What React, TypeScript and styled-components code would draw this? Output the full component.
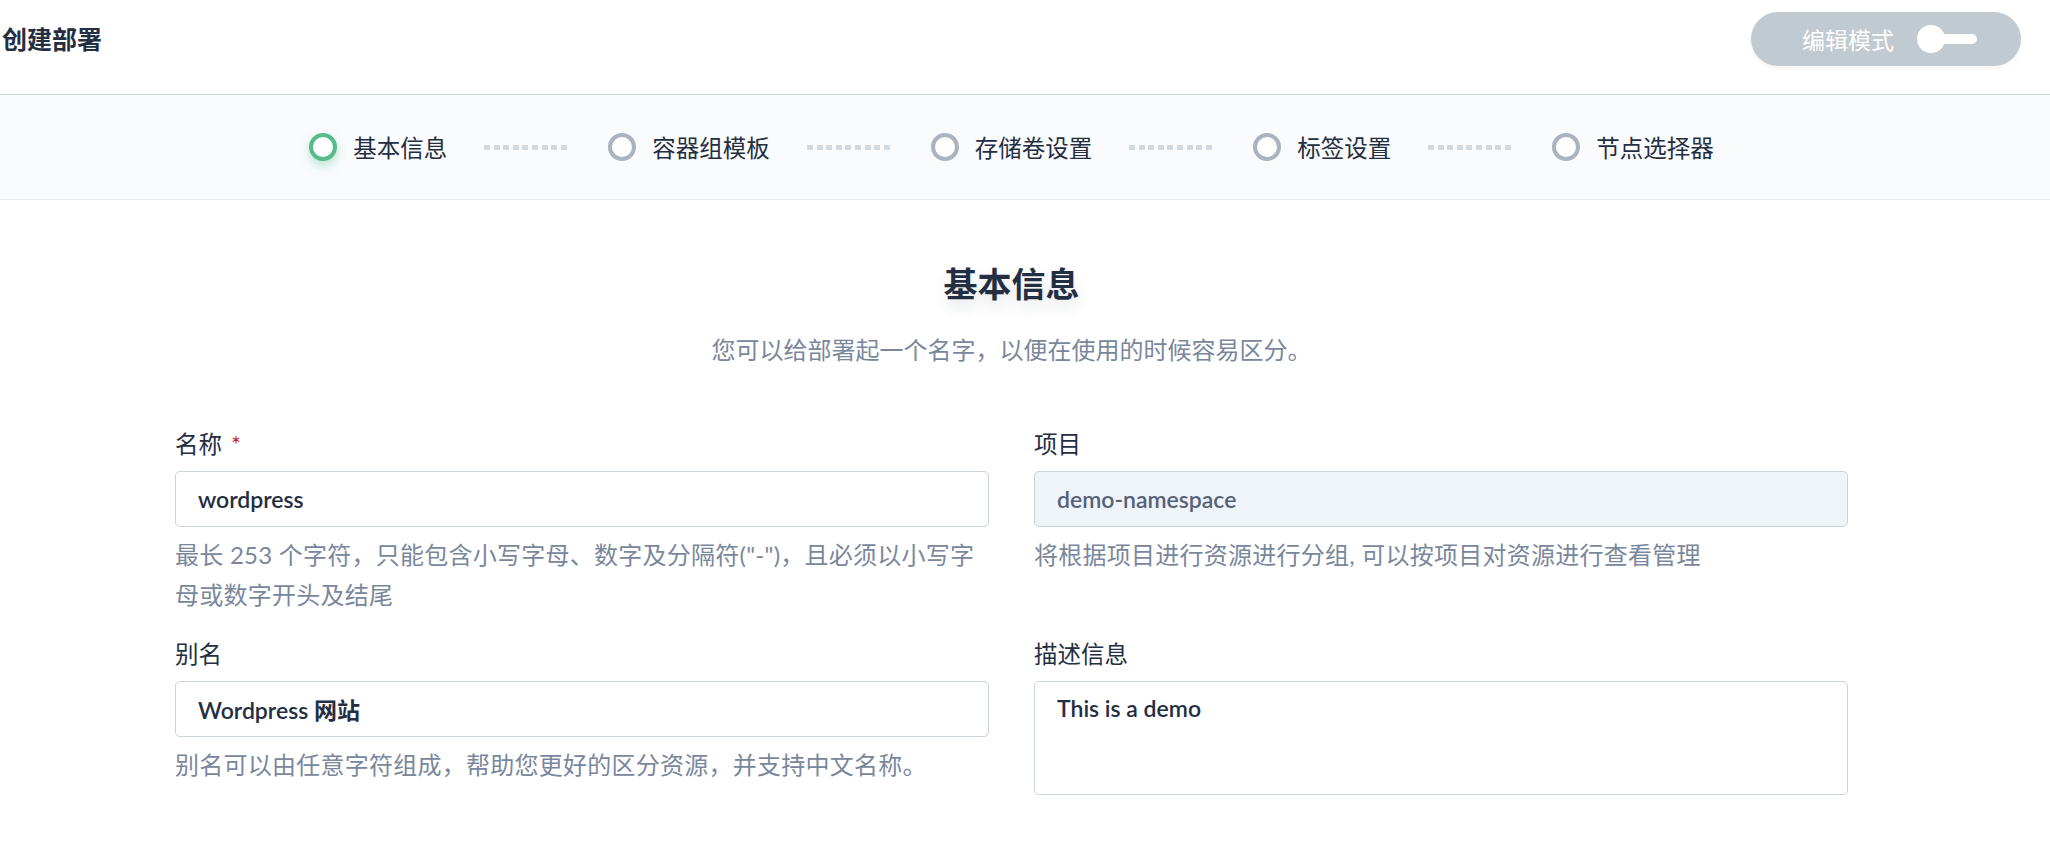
import React, { FC } from 'react'
import styled, { createGlobalStyle } from 'styled-components'

const GlobalStyle = createGlobalStyle`
    body {
        margin: 0;
        background: #ffffff;
        font-family: 'Lato', 'Noto Sans CJK SC', sans-serif;
        color: #242e42;
    }
    * {
        box-sizing: border-box;
    }
`

export const Page = styled.div`
    width: 2050px;
    height: 842px;
    overflow: hidden;
    background: #ffffff;
`

export const Header = styled.div`
    display: flex;
    justify-content: space-between;
    align-items: center;
    padding: 12px 29px 28px 2px;
`

export const PageTitle = styled.h1`
    margin: 0;
    font-size: 25px;
    line-height: 54px;
    font-weight: 600;
    color: #242e42;
`

export const ModeToggle = styled.button`
    display: flex;
    align-items: center;
    width: 270px;
    height: 54px;
    padding: 0 0 0 51px;
    gap: 23px;
    border: none;
    border-radius: 27px;
    background: #c1c9d1;
    box-shadow: 0 2px 4px rgba(36, 46, 66, 0.06);
    font-family: inherit;
    font-size: 23px;
    color: #ffffff;
    cursor: pointer;
`

export const Stepper = styled.div`
    display: flex;
    justify-content: center;
    align-items: center;
    height: 106px;
    padding-right: 27px;
    border-top: 1px solid #ccd3db;
    border-bottom: 1px solid #e3e9ef;
    background: #f9fbfd;
`

export const Step = styled.div`
    display: flex;
    align-items: center;
    gap: 16px;
    font-size: 23.5px;
    color: #242e42;
`

export const StepCircle = styled.span<{ $active?: boolean }>`
    width: 28px;
    height: 28px;
    border-radius: 50%;
    border: 4.5px solid ${(p) => (p.$active ? '#55bc8a' : '#abb4be')};
    background: #ffffff;
    box-shadow: ${(p) => (p.$active ? '0 5px 10px rgba(85, 188, 138, 0.35)' : 'none')};
`

export const Connector = styled.span`
    width: 86px;
    height: 5px;
    margin: 0 38px 0 37px;
    background: repeating-linear-gradient(90deg, #d3d9e0 0 6px, transparent 6px 9.6px);
`

export const Main = styled.div`
    padding-right: 27px;
`

export const SectionTitle = styled.h2`
    margin: 60px 0 0 0;
    font-size: 34px;
    line-height: 48px;
    font-weight: 600;
    text-align: center;
    color: #242e42;
    text-shadow: 0 8px 16px rgba(36, 46, 66, 0.12);
`

export const SectionDesc = styled.p`
    margin: 26px 0 0 0;
    font-size: 24px;
    line-height: 32px;
    text-align: center;
    color: #79879c;
`

export const FormGrid = styled.div`
    display: grid;
    grid-template-columns: 814px 814px;
    justify-content: center;
    column-gap: 45px;
    row-gap: 23px;
    margin-top: 62px;
`

export const Field = styled.div`
    display: flex;
    flex-direction: column;
`

export const Label = styled.label`
    margin-bottom: 11px;
    font-size: 23.5px;
    line-height: 32px;
    color: #242e42;
`

export const Required = styled.span`
    margin-left: 9px;
    color: #ca2621;
`

export const TextInput = styled.input`
    width: 100%;
    height: 56px;
    padding: 0 22px;
    border: 1px solid #ccd3db;
    border-radius: 5px;
    background: #ffffff;
    font-family: inherit;
    font-size: 23px;
    font-weight: 600;
    color: #242e42;
    outline: none;

    &:disabled {
        background: #eff4f9;
        color: #56627a;
    }
`

export const TextArea = styled.textarea`
    width: 100%;
    height: 114px;
    padding: 10px 22px;
    border: 1px solid #ccd3db;
    border-radius: 5px;
    background: #ffffff;
    font-family: inherit;
    font-size: 23px;
    line-height: 32px;
    font-weight: 600;
    color: #242e42;
    resize: none;
    outline: none;
`

export const Help = styled.div`
    margin-top: 8px;
    font-size: 24px;
    letter-spacing: 0.25px;
    line-height: 40px;
    color: #79879c;
`

const SwitchIcon: FC = () => (
    <svg width="60" height="28" viewBox="0 0 60 28">
        <rect x="12" y="9" width="48" height="10" rx="5" fill="#ffffff" />
        <circle cx="14" cy="14" r="14" fill="#ffffff" />
    </svg>
)

const steps = ['基本信息', '容器组模板', '存储卷设置', '标签设置', '节点选择器']

const App: FC = () => {
    return (
        <Page>
            <GlobalStyle />
            <Header>
                <PageTitle>创建部署</PageTitle>
                <ModeToggle>
                    编辑模式
                    <SwitchIcon />
                </ModeToggle>
            </Header>
            <Stepper>
                {steps.map((s, i) => (
                    <React.Fragment key={s}>
                        {i > 0 && <Connector />}
                        <Step>
                            <StepCircle $active={i === 0} />
                            {s}
                        </Step>
                    </React.Fragment>
                ))}
            </Stepper>
            <Main>
                <SectionTitle>基本信息</SectionTitle>
                <SectionDesc>您可以给部署起一个名字，以便在使用的时候容易区分。</SectionDesc>
                <FormGrid>
                    <Field>
                        <Label>
                            名称<Required>*</Required>
                        </Label>
                        <TextInput defaultValue="wordpress" />
                        <Help>
                            最长 253 个字符，只能包含小写字母、数字及分隔符("-")，且必须以小写字母或数字开头及结尾
                        </Help>
                    </Field>
                    <Field>
                        <Label>项目</Label>
                        <TextInput defaultValue="demo-namespace" disabled />
                        <Help>将根据项目进行资源进行分组, 可以按项目对资源进行查看管理</Help>
                    </Field>
                    <Field>
                        <Label>别名</Label>
                        <TextInput defaultValue="Wordpress 网站" />
                        <Help>别名可以由任意字符组成，帮助您更好的区分资源，并支持中文名称。</Help>
                    </Field>
                    <Field>
                        <Label>描述信息</Label>
                        <TextArea defaultValue="This is a demo" />
                    </Field>
                </FormGrid>
            </Main>
        </Page>
    )
}

export default App
